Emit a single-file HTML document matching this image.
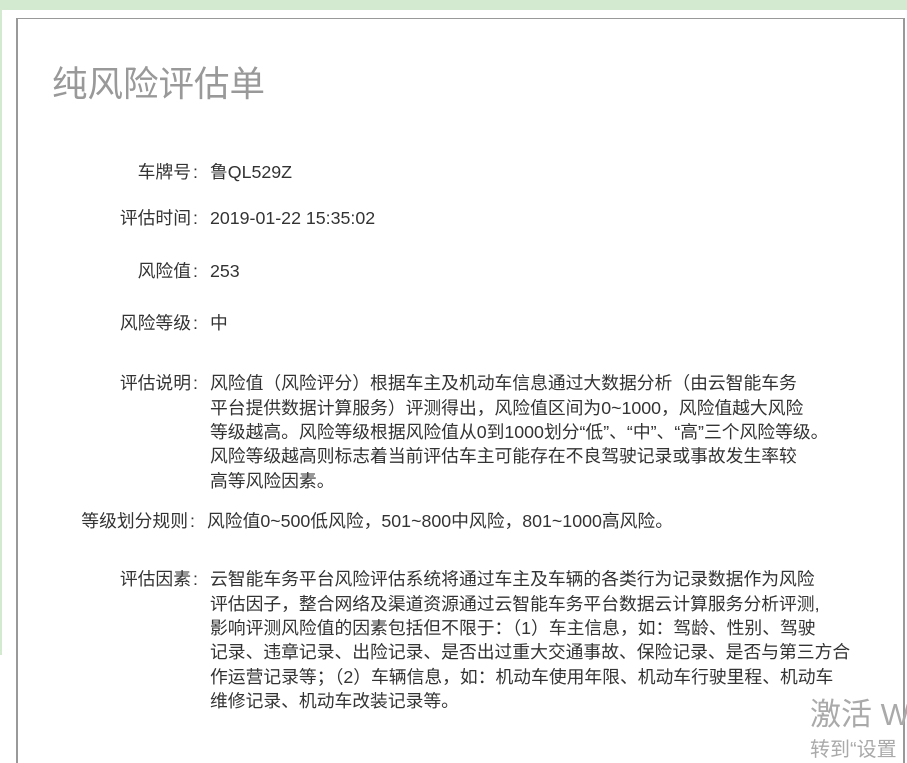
<!DOCTYPE html>
<html><head><meta charset="utf-8"><style>
html,body{margin:0;padding:0;}
html{width:907px;height:763px;overflow:hidden;}
body{width:907px;height:763px;position:relative;overflow:hidden;background:#fff;font-family:"Liberation Sans","Noto Sans CJK SC",sans-serif;color:#333;}
#gt{position:absolute;left:0;top:0;width:907px;height:10px;background:#d3ead0;}
#gl{position:absolute;left:0;top:0;width:2px;height:655px;background:#d3ead0;}
#box{position:absolute;left:16px;top:18px;width:889px;height:760px;border:1px solid #999;border-left-width:2px;border-right-width:2px;box-sizing:border-box;}
#title{position:absolute;left:52px;top:62px;font-size:35.5px;color:#999;line-height:44px;white-space:nowrap;}
.l{position:absolute;right:702px;font-size:17.8px;line-height:20px;white-space:nowrap;}
.l i{font-style:normal;display:inline-block;width:14px;text-align:left;padding-left:2px;box-sizing:border-box;}
.v{position:absolute;left:210px;font-size:17.8px;line-height:20px;white-space:nowrap;}
.wm{position:absolute;color:#aaa;white-space:nowrap;}
</style></head><body>
<div id="gt"></div><div id="gl"></div>
<div id="box"></div>
<div id="title">纯风险评估单</div>

<div class="l" style="top:162px">车牌号<i>:</i></div><div class="v" style="top:162px">鲁QL529Z</div>
<div class="l" style="top:208px">评估时间<i>:</i></div><div class="v" style="top:208px">2019-01-22 15:35:02</div>
<div class="l" style="top:261px">风险值<i>:</i></div><div class="v" style="top:261px">253</div>
<div class="l" style="top:313px">风险等级<i>:</i></div><div class="v" style="top:313px">中</div>

<div class="l" style="top:373px">评估说明<i>:</i></div>
<div class="v" style="top:373px">风险值（风险评分）根据车主及机动车信息通过大数据分析（由云智能车务</div>
<div class="v" style="top:398px">平台提供数据计算服务）评测得出，风险值区间为0~1000，风险值越大风险</div>
<div class="v" style="top:422px">等级越高。风险等级根据风险值从0到1000划分“低”、“中”、“高”三个风险等级。</div>
<div class="v" style="top:446px">风险等级越高则标志着当前评估车主可能存在不良驾驶记录或事故发生率较</div>
<div class="v" style="top:471px">高等风险因素。</div>

<div class="l" style="top:511px;right:705px">等级划分规则<i>:</i></div>
<div class="v" style="top:511px;left:207px">风险值0~500低风险，501~800中风险，801~1000高风险。</div>

<div class="l" style="top:569px">评估因素<i>:</i></div>
<div class="v" style="top:569px">云智能车务平台风险评估系统将通过车主及车辆的各类行为记录数据作为风险</div>
<div class="v" style="top:594px">评估因子，整合网络及渠道资源通过云智能车务平台数据云计算服务分析评测,</div>
<div class="v" style="top:618px">影响评测风险值的因素包括但不限于：（1）车主信息，如：驾龄、性别、驾驶</div>
<div class="v" style="top:642px">记录、违章记录、出险记录、是否出过重大交通事故、保险记录、是否与第三方合</div>
<div class="v" style="top:667px">作运营记录等；（2）车辆信息，如：机动车使用年限、机动车行驶里程、机动车</div>
<div class="v" style="top:691px">维修记录、机动车改装记录等。</div>

<div class="wm" style="left:810px;top:696px;font-size:31px;line-height:38px">激活 W</div>
<div class="wm" style="left:810px;top:737px;font-size:20px;line-height:26px">转到“设置</div>
</body></html>
